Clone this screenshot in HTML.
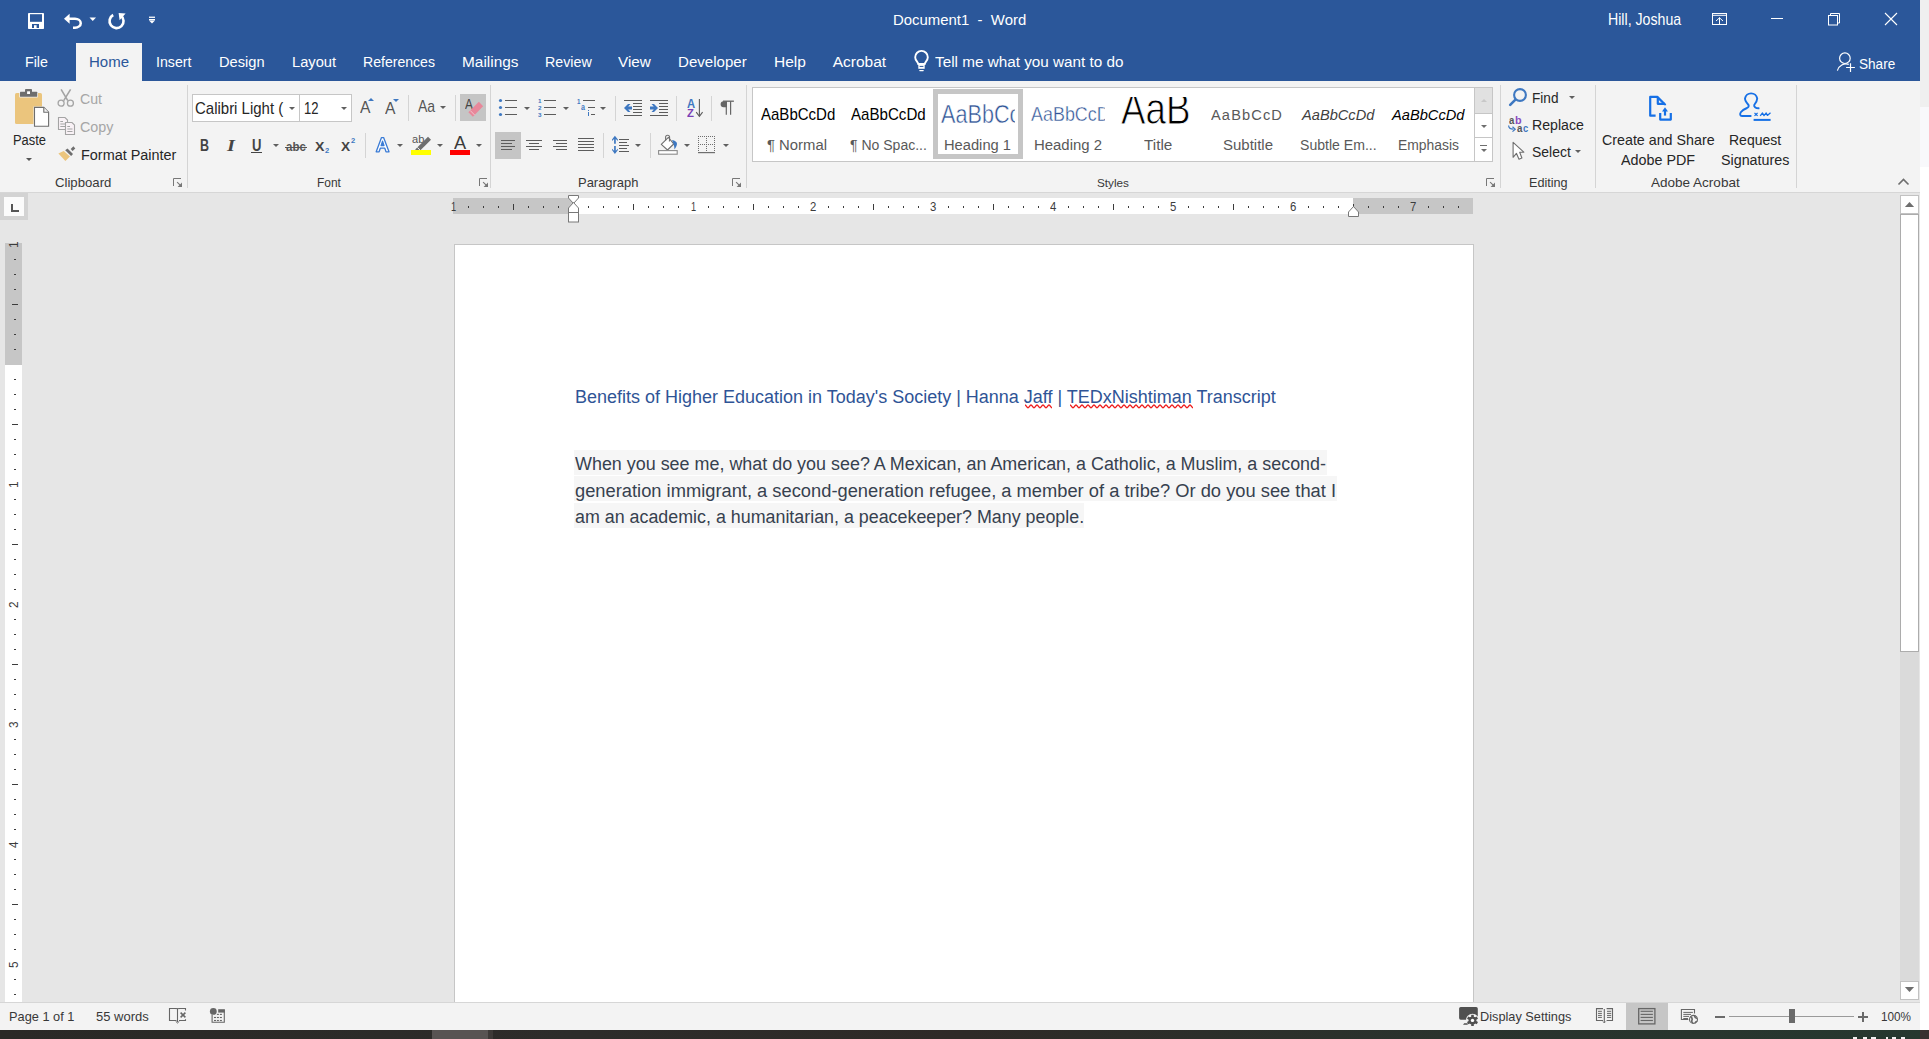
<!DOCTYPE html>
<html><head><meta charset="utf-8"><style>
html,body{margin:0;padding:0;width:1929px;height:1039px;overflow:hidden;background:#ffffff;}
body{position:relative;font-family:"Liberation Sans",sans-serif;}
.b{position:absolute;box-sizing:border-box;}
.t{position:absolute;white-space:pre;transform-origin:0 0;font-family:"Liberation Sans",sans-serif;}
svg{position:absolute;overflow:visible;}
</style></head><body>
<div class="b" style="left:1920px;top:0px;width:9px;height:107px;background:#efefef"></div>
<div class="b" style="left:1920px;top:107px;width:9px;height:60px;background:#f8f8fb"></div>
<div class="b" style="left:1920px;top:167px;width:9px;height:863px;background:#ffffff"></div>
<div class="b" style="left:0px;top:0px;width:1920px;height:81px;background:#2b579a"></div>
<div class="b" style="left:76px;top:43px;width:66px;height:38px;background:#f3f3f3"></div>
<div class="b" style="left:0px;top:81px;width:1920px;height:111px;background:#f3f3f3"></div>
<div class="b" style="left:0px;top:192px;width:1920px;height:1px;background:#d6d6d6"></div>
<div class="b" style="left:0px;top:193px;width:1920px;height:809px;background:#e6e6e6"></div>
<div class="b" style="left:0px;top:1002px;width:1920px;height:1px;background:#d6d6d6"></div>
<div class="b" style="left:0px;top:1003px;width:1920px;height:27px;background:#f3f3f3"></div>
<div class="b" style="left:0px;top:1030px;width:1929px;height:9px;background:linear-gradient(90deg,#2a2926 0%,#2d2c2a 30%,#2e2a27 50%,#2a332d 75%,#26382f 100%)"></div>
<div class="b" style="left:432px;top:1030px;width:56px;height:9px;background:#585453"></div>
<div class="b" style="left:488px;top:1030px;width:5px;height:9px;background:#3d3a38"></div>
<div class="b" style="left:1920px;top:1030px;width:9px;height:9px;background:#3a3131"></div>
<div class="b" style="left:454px;top:244px;width:1020px;height:758px;background:#fff;border-left:1px solid #c6c6c6;border-top:1px solid #c6c6c6;border-right:1px solid #c6c6c6"></div>
<div class="b" style="left:453px;top:198px;width:120px;height:16px;background:#c6c6c6"></div>
<div class="b" style="left:573px;top:198px;width:780px;height:16px;background:#ffffff"></div>
<div class="b" style="left:1353px;top:198px;width:120px;height:16px;background:#c6c6c6"></div>
<div class="b" style="left:0px;top:193px;width:28px;height:27px;background:#d3d3d3"></div>
<div class="b" style="left:4px;top:197px;width:20px;height:19px;background:#fbfbfb"></div>
<div class="b" style="left:5px;top:243px;width:17px;height:122px;background:#c6c6c6"></div>
<div class="b" style="left:5px;top:365px;width:17px;height:637px;background:#ffffff"></div>
<div class="b" style="left:1900px;top:195px;width:19px;height:19px;background:#fff;border:1px solid #c2c2c2"></div>
<div class="b" style="left:1900px;top:214px;width:19px;height:438px;background:#fff;border:1px solid #acacac"></div>
<div class="b" style="left:1900px;top:652px;width:19px;height:329px;background:#dadada"></div>
<div class="b" style="left:1900px;top:981px;width:19px;height:19px;background:#fff;border:1px solid #c2c2c2"></div>
<div class="b" style="left:574px;top:450px;width:753px;height:25px;background:#f6f6f6"></div>
<div class="b" style="left:574px;top:476px;width:763px;height:25px;background:#f6f6f6"></div>
<div class="b" style="left:574px;top:503px;width:510px;height:25px;background:#f6f6f6"></div>
<div class="t" style="left:892.90px;top:11.00px;font-size:15.50px;line-height:17px;color:#ffffff;transform:scaleX(0.9623);">Document1  -  Word</div>
<div class="t" style="left:1608.20px;top:10.00px;font-size:16.10px;line-height:18px;color:#ffffff;transform:scaleX(0.8798);">Hill, Joshua</div>
<div class="t" style="left:25.00px;top:53.00px;font-size:15.50px;line-height:17px;color:#ffffff;transform:scaleX(0.9177);">File</div>
<div class="t" style="left:156.20px;top:53.00px;font-size:15.50px;line-height:17px;color:#ffffff;transform:scaleX(0.9135);">Insert</div>
<div class="t" style="left:219.20px;top:53.00px;font-size:15.50px;line-height:17px;color:#ffffff;transform:scaleX(0.9444);">Design</div>
<div class="t" style="left:291.80px;top:53.00px;font-size:15.50px;line-height:17px;color:#ffffff;transform:scaleX(0.9468);">Layout</div>
<div class="t" style="left:362.90px;top:53.00px;font-size:15.50px;line-height:17px;color:#ffffff;transform:scaleX(0.9081);">References</div>
<div class="t" style="left:461.80px;top:53.00px;font-size:15.50px;line-height:17px;color:#ffffff;transform:scaleX(0.9932);">Mailings</div>
<div class="t" style="left:545.20px;top:53.00px;font-size:15.50px;line-height:17px;color:#ffffff;transform:scaleX(0.9186);">Review</div>
<div class="t" style="left:618.40px;top:53.00px;font-size:15.50px;line-height:17px;color:#ffffff;transform:scaleX(0.9842);">View</div>
<div class="t" style="left:678.00px;top:53.00px;font-size:15.50px;line-height:17px;color:#ffffff;transform:scaleX(0.9720);">Developer</div>
<div class="t" style="left:774.00px;top:53.00px;font-size:15.50px;line-height:17px;color:#ffffff;">Help</div>
<div class="t" style="left:832.70px;top:53.00px;font-size:15.50px;line-height:17px;color:#ffffff;">Acrobat</div>
<div class="t" style="left:935.30px;top:53.00px;font-size:15.50px;line-height:17px;color:#ffffff;transform:scaleX(0.9855);">Tell me what you want to do</div>
<div class="t" style="left:88.50px;top:53.00px;font-size:15.50px;line-height:17px;color:#2b579a;transform:scaleX(0.9690);">Home</div>
<div class="t" style="left:1859.40px;top:55.00px;font-size:15.40px;line-height:17px;color:#ffffff;transform:scaleX(0.8828);">Share</div>
<div class="t" style="left:12.50px;top:131.00px;font-size:15.50px;line-height:17px;color:#262626;transform:scaleX(0.8308);">Paste</div>
<div class="t" style="left:80.00px;top:91.00px;font-size:14.50px;line-height:16px;color:#a6a6a6;transform:scaleX(0.9757);">Cut</div>
<div class="t" style="left:80.00px;top:118.00px;font-size:15.20px;line-height:17px;color:#a6a6a6;transform:scaleX(0.9411);">Copy</div>
<div class="t" style="left:80.60px;top:146.00px;font-size:15.50px;line-height:17px;color:#262626;transform:scaleX(0.9304);">Format Painter</div>
<div class="t" style="left:54.60px;top:175.00px;font-size:13.60px;line-height:15px;color:#383838;transform:scaleX(0.9689);">Clipboard</div>
<div class="t" style="left:316.50px;top:175.00px;font-size:13.00px;line-height:15px;color:#383838;transform:scaleX(0.9192);">Font</div>
<div class="t" style="left:578.00px;top:175.00px;font-size:12.80px;line-height:15px;color:#383838;transform:scaleX(1.0121);">Paragraph</div>
<div class="t" style="left:1097.40px;top:176.00px;font-size:11.80px;line-height:14px;color:#383838;transform:scaleX(0.9952);">Styles</div>
<div class="t" style="left:1528.70px;top:176.00px;font-size:12.60px;line-height:14px;color:#383838;transform:scaleX(1.0037);">Editing</div>
<div class="t" style="left:1651.30px;top:175.00px;font-size:13.30px;line-height:15px;color:#383838;transform:scaleX(1.0166);">Adobe Acrobat</div>
<div class="t" style="left:1531.50px;top:89.00px;font-size:15.10px;line-height:17px;color:#262626;transform:scaleX(0.9023);">Find</div>
<div class="t" style="left:1531.80px;top:116.00px;font-size:15.10px;line-height:17px;color:#262626;transform:scaleX(0.9365);">Replace</div>
<div class="t" style="left:1531.80px;top:144.00px;font-size:14.90px;line-height:16px;color:#262626;transform:scaleX(0.9367);">Select</div>
<div class="t" style="left:1602.30px;top:132.00px;font-size:14.80px;line-height:16px;color:#262626;transform:scaleX(0.9637);">Create and Share</div>
<div class="t" style="left:1621.40px;top:152.00px;font-size:14.90px;line-height:16px;color:#262626;transform:scaleX(0.9619);">Adobe PDF</div>
<div class="t" style="left:1728.50px;top:132.00px;font-size:14.80px;line-height:16px;color:#262626;transform:scaleX(0.9469);">Request</div>
<div class="t" style="left:1720.60px;top:152.00px;font-size:14.90px;line-height:16px;color:#262626;transform:scaleX(0.9604);">Signatures</div>
<div class="t" style="left:8.50px;top:1009.00px;font-size:13.20px;line-height:15px;color:#383838;transform:scaleX(0.9701);">Page 1 of 1</div>
<div class="t" style="left:95.50px;top:1009.00px;font-size:13.20px;line-height:15px;color:#383838;transform:scaleX(0.9852);">55 words</div>
<div class="t" style="left:1480.00px;top:1009.00px;font-size:13.20px;line-height:15px;color:#383838;transform:scaleX(0.9668);">Display Settings</div>
<div class="t" style="left:1880.90px;top:1009.00px;font-size:12.80px;line-height:15px;color:#383838;transform:scaleX(0.9186);">100%</div>
<div class="t" style="left:575.40px;top:386.00px;font-size:18.80px;line-height:21px;color:#2f5496;transform:scaleX(0.9580);">Benefits of Higher Education in Today's Society | Hanna Jaff | TEDxNishtiman Transcript</div>
<div class="t" style="left:574.50px;top:453.00px;font-size:19.20px;line-height:21px;color:#36414f;transform:scaleX(0.9339);">When you see me, what do you see? A Mexican, an American, a Catholic, a Muslim, a second-</div>
<div class="t" style="left:574.50px;top:480.00px;font-size:19.20px;line-height:21px;color:#36414f;transform:scaleX(0.9539);">generation immigrant, a second-generation refugee, a member of a tribe? Or do you see that I</div>
<div class="t" style="left:574.50px;top:506.00px;font-size:19.20px;line-height:21px;color:#36414f;transform:scaleX(0.9305);">am an academic, a humanitarian, a peacekeeper? Many people.</div>
<svg style="left:27px;top:12px" width="18" height="18" viewBox="0 0 18 18" ><rect x="1" y="1" width="16" height="16" rx="0.8" fill="#ffffff"/><rect x="3" y="2.2" width="12" height="7.6" fill="#2b579a"/><rect x="5" y="12" width="7" height="4" fill="#2b579a"/><rect x="7" y="13.2" width="2.6" height="2.8" fill="#ffffff"/></svg>
<svg style="left:62px;top:12px" width="22" height="20" viewBox="0 0 22 20" ><path d="M6 6.7 H13 A5.75 4.5 0 0 1 13 15.7 H11" fill="none" stroke="#ffffff" stroke-width="2.5"/><path d="M2 6.7 L7.6 1.7 V11.7 Z" fill="#ffffff"/></svg>
<svg style="left:88px;top:16px" width="10" height="6" viewBox="0 0 10 6" ><path d="M1.5 1.4 H8 L4.75 5 Z" fill="#ffffff"/></svg>
<svg style="left:107px;top:12px" width="21" height="19" viewBox="0 0 21 19" ><path d="M13.8 3.6 A7 7 0 1 1 6.2 3.0" fill="none" stroke="#ffffff" stroke-width="2.6"/><path d="M11.6 1 L18.6 1.6 L12.6 8.2 Z" fill="#ffffff"/></svg>
<svg style="left:147px;top:15px" width="10" height="10" viewBox="0 0 10 10" ><rect x="2" y="1.6" width="6" height="1.3" fill="#ffffff"/><rect x="2" y="4" width="6" height="1.3" fill="#ffffff"/><path d="M2 5.6 H8 L5 8.4 Z" fill="#ffffff"/></svg>
<svg style="left:1711px;top:12px" width="18" height="15" viewBox="0 0 18 15" ><rect x="1.5" y="1.5" width="14" height="11" fill="none" stroke="#ffffff" stroke-width="1"/><line x1="1.5" y1="3.3" x2="15.5" y2="3.3" stroke="#ffffff" stroke-width="1"/><line x1="8.5" y1="5.5" x2="8.5" y2="12.5" stroke="#ffffff" stroke-width="1"/><path d="M5 9 L8.5 5.8 L12 9" fill="none" stroke="#ffffff" stroke-width="1"/></svg>
<div class="b" style="left:1771px;top:18px;width:12px;height:1px;background:#fff"></div>
<svg style="left:1826px;top:12px" width="16" height="15" viewBox="0 0 16 15" ><rect x="2.5" y="3.5" width="9" height="9.5" fill="none" stroke="#ffffff" stroke-width="1"/><path d="M4.5 3.5 V1.5 H13.5 V11 H11.5" fill="none" stroke="#ffffff" stroke-width="1"/></svg>
<svg style="left:1884px;top:12px" width="15" height="15" viewBox="0 0 15 15" ><path d="M1 1 L13 13 M13 1 L1 13" stroke="#ffffff" stroke-width="1.1"/></svg>
<svg style="left:912px;top:49px" width="20" height="24" viewBox="0 0 20 24" ><path d="M6.3 15 C5.8 12.5 3.2 11.5 3.2 8.2 A6.3 6.3 0 0 1 15.8 8.2 C15.8 11.5 13.2 12.5 12.7 15 Z" fill="none" stroke="#ffffff" stroke-width="1.9"/><rect x="6.3" y="15" width="6.4" height="4.8" fill="#ffffff"/><rect x="7.6" y="16.9" width="3.8" height="1" fill="#2b579a"/><rect x="7.2" y="21" width="4.6" height="1.2" rx="0.6" fill="#ffffff"/></svg>
<svg style="left:1835px;top:50px" width="22" height="24" viewBox="0 0 22 24" ><circle cx="9.9" cy="8.2" r="5.3" fill="none" stroke="#ffffff" stroke-width="1.2"/><path d="M2.4 20.6 A9 9 0 0 1 13.8 14.4" fill="none" stroke="#ffffff" stroke-width="1.2"/><path d="M11.1 17.5 H19.9 M15.5 13.3 V21.9" stroke="#ffffff" stroke-width="1.2"/></svg>
<div class="b" style="left:187px;top:85px;width:1px;height:103px;background:#d4d4d4"></div>
<div class="b" style="left:490px;top:85px;width:1px;height:103px;background:#d4d4d4"></div>
<div class="b" style="left:746px;top:85px;width:1px;height:103px;background:#d4d4d4"></div>
<div class="b" style="left:1500px;top:85px;width:1px;height:103px;background:#d4d4d4"></div>
<div class="b" style="left:1595px;top:85px;width:1px;height:103px;background:#d4d4d4"></div>
<div class="b" style="left:1796px;top:85px;width:1px;height:103px;background:#d4d4d4"></div>
<svg style="left:173px;top:178px" width="10" height="10" viewBox="0 0 10 10" ><path d="M0.5 8 V0.5 H8" fill="none" stroke="#777" stroke-width="1"/><path d="M4.1 4.1 L8.2 8.2" stroke="#777" stroke-width="1.1"/><path d="M9 9 H4.6 L9 4.6 Z" fill="#777"/></svg>
<svg style="left:479px;top:178px" width="10" height="10" viewBox="0 0 10 10" ><path d="M0.5 8 V0.5 H8" fill="none" stroke="#777" stroke-width="1"/><path d="M4.1 4.1 L8.2 8.2" stroke="#777" stroke-width="1.1"/><path d="M9 9 H4.6 L9 4.6 Z" fill="#777"/></svg>
<svg style="left:732px;top:178px" width="10" height="10" viewBox="0 0 10 10" ><path d="M0.5 8 V0.5 H8" fill="none" stroke="#777" stroke-width="1"/><path d="M4.1 4.1 L8.2 8.2" stroke="#777" stroke-width="1.1"/><path d="M9 9 H4.6 L9 4.6 Z" fill="#777"/></svg>
<svg style="left:1486px;top:178px" width="10" height="10" viewBox="0 0 10 10" ><path d="M0.5 8 V0.5 H8" fill="none" stroke="#777" stroke-width="1"/><path d="M4.1 4.1 L8.2 8.2" stroke="#777" stroke-width="1.1"/><path d="M9 9 H4.6 L9 4.6 Z" fill="#777"/></svg>
<svg style="left:13px;top:87px" width="40" height="42" viewBox="0 0 40 42" ><rect x="2" y="6" width="27" height="31" rx="1.6" fill="#ebc57d"/><rect x="6.3" y="4.2" width="18.6" height="6.2" rx="0.6" fill="#f3f3f3"/><rect x="7" y="4.7" width="17.2" height="5" rx="0.5" fill="#6e6e6e"/><rect x="12" y="2" width="7" height="4" rx="0.8" fill="#6e6e6e"/><rect x="14.1" y="4.3" width="2.9" height="2.7" fill="#fff"/><rect x="20.5" y="19.5" width="16" height="21" fill="#f3f3f3"/><path d="M21.5 20.4 H30.8 L35.6 25.2 V39.3 H21.5 Z" fill="#fff" stroke="#6e6e6e" stroke-width="1.1"/><path d="M30.8 20.4 V25.2 H35.6" fill="#f3f3f3" stroke="#6e6e6e" stroke-width="1.1" stroke-linejoin="round"/></svg>
<svg style="left:25px;top:157px" width="8" height="5" viewBox="0 0 8 5" ><path d="M1 1 H7 L4.0 4 Z" fill="#555"/></svg>
<svg style="left:56px;top:88px" width="20" height="20" viewBox="0 0 20 20" ><circle cx="5.1" cy="15.2" r="3" fill="none" stroke="#a4a4a4" stroke-width="1.3"/><circle cx="14.4" cy="15.2" r="3" fill="none" stroke="#a4a4a4" stroke-width="1.3"/><path d="M5.1 1.4 L11.8 12.6 M14.6 1.4 L7.7 12.6" stroke="#a4a4a4" stroke-width="1.6"/></svg>
<svg style="left:56px;top:115px" width="21" height="22" viewBox="0 0 21 22" ><path d="M2.5 2.5 H9 L11.5 5 V14.5 H2.5 Z" fill="#f9f2f6" stroke="#a4a4a4" stroke-width="1.1"/><path d="M4.3 6.5 H7 M4.3 9 H9.5 M4.3 11.5 H9.5" stroke="#a4a4a4" stroke-width="1"/><path d="M9.5 7.5 H16 L18.5 10 V19.5 H9.5 Z" fill="#f9f2f6" stroke="#a4a4a4" stroke-width="1.1"/><path d="M11.3 11.5 H14 M11.3 14 H16.5 M11.3 16.5 H16.5" stroke="#a4a4a4" stroke-width="1"/></svg>
<svg style="left:55px;top:142px" width="24" height="22" viewBox="0 0 24 22" ><path d="M3.4 11.4 L8.7 9.1 L15 14.4 L10.4 19.1 Z" fill="#ebc57d"/><path d="M10.2 8.3 L12.5 6.6 L18 12.1 L16.1 14 Z" fill="#6e6e6e"/><path d="M15.7 7 L18.4 4.2 L20.3 6.4 L17.6 9.1 Z" fill="#6e6e6e"/></svg>
<div class="b" style="left:192px;top:94px;width:108px;height:28px;background:#fff;border:1px solid #c6c6c6"></div>
<div class="b" style="left:299px;top:94px;width:53px;height:28px;background:#fff;border:1px solid #c6c6c6"></div>
<svg style="left:288px;top:106px" width="8" height="5" viewBox="0 0 8 5" ><path d="M1 1 H7 L4.0 4 Z" fill="#5f5f5f"/></svg>
<svg style="left:340px;top:106px" width="8" height="5" viewBox="0 0 8 5" ><path d="M1 1 H7 L4.0 4 Z" fill="#5f5f5f"/></svg>
<div class="t" style="left:195.40px;top:99.00px;font-size:16.20px;line-height:18px;color:#262626;transform:scaleX(0.9254);">Calibri Light (</div>
<div class="t" style="left:304.00px;top:99.00px;font-size:16.20px;line-height:18px;color:#262626;transform:scaleX(0.8064);">12</div>
<div class="t" style="left:359.90px;top:98.00px;font-size:16.10px;line-height:18px;color:#555;transform:scaleX(0.9734);">A</div>
<svg style="left:367px;top:97px" width="8" height="5" viewBox="0 0 8 5" ><path d="M1 4 H7 L4 1 Z" fill="#3e78c1"/></svg>
<div class="t" style="left:385.10px;top:100.00px;font-size:15.90px;line-height:17px;color:#555;transform:scaleX(0.9856);">A</div>
<svg style="left:392px;top:98px" width="8" height="5" viewBox="0 0 8 5" ><path d="M1 1 H7 L4 4 Z" fill="#3e78c1"/></svg>
<div class="b" style="left:408px;top:95px;width:1px;height:26px;background:#d4d4d4"></div>
<div class="t" style="left:417.60px;top:97.00px;font-size:16.40px;line-height:18px;color:#555;transform:scaleX(0.8561);">Aa</div>
<svg style="left:439px;top:105px" width="8" height="5" viewBox="0 0 8 5" ><path d="M1 1 H7 L4.0 4 Z" fill="#5f5f5f"/></svg>
<div class="b" style="left:455px;top:95px;width:1px;height:26px;background:#d4d4d4"></div>
<div class="b" style="left:460px;top:94px;width:26px;height:27px;background:#c5c5c5"></div>
<div class="t" style="left:465.40px;top:95.00px;font-size:15.50px;line-height:17px;color:#444;transform:scaleX(0.7607);">A</div>
<svg style="left:466px;top:100px" width="20" height="20" viewBox="0 0 20 20" ><path d="M2.4 12.3 L12.9 1.8 L17.1 6.3 L6.9 16.8 Z" fill="#e8879a"/><path d="M4.2 10.5 L8.6 15" stroke="#f2c4cd" stroke-width="1"/></svg>
<div class="t" style="left:199.70px;top:136.00px;font-size:16.70px;line-height:19px;color:#444;font-weight:bold;transform:scaleX(0.7485);">B</div>
<div class="t" style="left:227.30px;top:135.00px;font-size:17.42px;line-height:20px;color:#444;font-weight:bold;font-style:italic;transform:scaleX(1.1748);font-family:'Liberation Serif',serif;">I</div>
<div class="t" style="left:251.90px;top:136.00px;font-size:16.70px;line-height:19px;color:#444;font-weight:bold;transform:scaleX(0.7818);">U</div>
<div class="b" style="left:251px;top:152px;width:11px;height:1px;background:#444"></div>
<svg style="left:272px;top:143px" width="8" height="5" viewBox="0 0 8 5" ><path d="M1 1 H7 L4.0 4 Z" fill="#5f5f5f"/></svg>
<div class="t" style="left:286.10px;top:139.00px;font-size:13.33px;line-height:15px;color:#555;font-weight:bold;transform:scaleX(0.8654);">abc</div>
<div class="b" style="left:285px;top:146.6px;width:22px;height:1.2px;background:#555"></div>
<div class="t" style="left:314.80px;top:140.00px;font-size:12.30px;line-height:14px;color:#444;font-weight:bold;transform:scaleX(1.1492);">X</div>
<div class="t" style="left:324.90px;top:146.00px;font-size:7.68px;line-height:9px;color:#3e78c1;font-weight:bold;transform:scaleX(0.9854);">2</div>
<div class="t" style="left:340.90px;top:140.00px;font-size:12.30px;line-height:14px;color:#444;font-weight:bold;transform:scaleX(1.1125);">X</div>
<div class="t" style="left:350.90px;top:136.00px;font-size:7.83px;line-height:9px;color:#3e78c1;font-weight:bold;transform:scaleX(0.9665);">2</div>
<div class="b" style="left:365px;top:133px;width:1px;height:25px;background:#d4d4d4"></div>
<svg style="left:374px;top:136px" width="18" height="18" viewBox="0 0 18 18" ><path d="M2.2 15.8 L7.5 1.6 H9.6 L15 15.8 H12 L10.8 12.2 H6.3 L5.1 15.8 Z M7.1 9.6 H10 L8.55 5.2 Z" fill="#fff" stroke="#3a7bd5" stroke-width="1.3" stroke-linejoin="round"/><path d="M7.4 9.3 H9.7 L8.55 5.6 Z" fill="#3a7bd5"/></svg>
<svg style="left:396px;top:143px" width="8" height="5" viewBox="0 0 8 5" ><path d="M1 1 H7 L4.0 4 Z" fill="#5f5f5f"/></svg>
<div class="t" style="left:411.50px;top:133.00px;font-size:10.68px;line-height:12px;color:#555;transform:scaleX(1.0376);">ab</div>
<svg style="left:412px;top:135px" width="22" height="18" viewBox="0 0 22 18" ><path d="M3.2 14.5 L16 1.8 L19 4.8 L6.2 17.5 Z" fill="#6e6e6e"/><path d="M5.3 12.4 L8.3 15.4" stroke="#f3f3f3" stroke-width="1"/></svg>
<div class="b" style="left:411px;top:150px;width:20px;height:5px;background:#ffff00"></div>
<svg style="left:436px;top:143px" width="8" height="5" viewBox="0 0 8 5" ><path d="M1 1 H7 L4.0 4 Z" fill="#5f5f5f"/></svg>
<div class="t" style="left:453.60px;top:132.00px;font-size:18.60px;line-height:21px;color:#3a3a3a;transform:scaleX(0.9790);">A</div>
<div class="b" style="left:450px;top:150px;width:20px;height:5px;background:#ff0000"></div>
<svg style="left:475px;top:143px" width="8" height="5" viewBox="0 0 8 5" ><path d="M1 1 H7 L4.0 4 Z" fill="#5f5f5f"/></svg>
<svg style="left:498px;top:98.0px" width="5" height="5" viewBox="0 0 5 5" ><circle cx="2.5" cy="2.5" r="1.6" fill="#3e78c1"/></svg>
<div class="b" style="left:505.1px;top:99.95px;width:11.899999999999977px;height:1.1px;background:#5c5c5c"></div>
<svg style="left:498px;top:104.9px" width="5" height="5" viewBox="0 0 5 5" ><circle cx="2.5" cy="2.5" r="1.6" fill="#3e78c1"/></svg>
<div class="b" style="left:505.1px;top:106.85000000000001px;width:11.899999999999977px;height:1.1px;background:#5c5c5c"></div>
<svg style="left:498px;top:111.9px" width="5" height="5" viewBox="0 0 5 5" ><circle cx="2.5" cy="2.5" r="1.6" fill="#3e78c1"/></svg>
<div class="b" style="left:505.1px;top:113.85000000000001px;width:11.899999999999977px;height:1.1px;background:#5c5c5c"></div>
<svg style="left:523px;top:106px" width="8" height="5" viewBox="0 0 8 5" ><path d="M1 1 H7 L4.0 4 Z" fill="#5f5f5f"/></svg>
<div class="b" style="left:544px;top:99.95px;width:12px;height:1.1px;background:#5c5c5c"></div>
<div class="b" style="left:544px;top:106.85000000000001px;width:12px;height:1.1px;background:#5c5c5c"></div>
<div class="b" style="left:544px;top:113.85000000000001px;width:12px;height:1.1px;background:#5c5c5c"></div>
<div class="t" style="left:537.80px;top:97.00px;font-size:6.23px;line-height:7px;color:#3e78c1;font-weight:bold;transform:scaleX(1.0122);">1</div>
<div class="t" style="left:537.80px;top:104.00px;font-size:6.23px;line-height:7px;color:#3e78c1;font-weight:bold;transform:scaleX(1.0122);">2</div>
<div class="t" style="left:537.80px;top:111.00px;font-size:6.23px;line-height:7px;color:#3e78c1;font-weight:bold;transform:scaleX(1.0122);">3</div>
<svg style="left:562px;top:106px" width="8" height="5" viewBox="0 0 8 5" ><path d="M1 1 H7 L4.0 4 Z" fill="#5f5f5f"/></svg>
<div class="t" style="left:576.70px;top:97.00px;font-size:7.25px;line-height:9px;color:#3e78c1;font-weight:bold;transform:scaleX(0.8450);">1</div>
<div class="b" style="left:583.2px;top:99.95px;width:11.799999999999955px;height:1.1px;background:#5c5c5c"></div>
<div class="t" style="left:581.00px;top:102.00px;font-size:8.30px;line-height:10px;color:#3e78c1;font-weight:bold;transform:scaleX(0.8530);">a</div>
<div class="b" style="left:588.2px;top:106.85000000000001px;width:6.7999999999999545px;height:1.1px;background:#5c5c5c"></div>
<div class="b" style="left:587.9px;top:111.5px;width:1.4px;height:4.6px;background:#3e78c1"></div>
<div class="b" style="left:587.9px;top:110.2px;width:1.4px;height:0.9px;background:#3e78c1"></div>
<div class="b" style="left:591px;top:113.85000000000001px;width:4px;height:1.1px;background:#5c5c5c"></div>
<svg style="left:599px;top:106px" width="8" height="5" viewBox="0 0 8 5" ><path d="M1 1 H7 L4.0 4 Z" fill="#5f5f5f"/></svg>
<div class="b" style="left:615px;top:96px;width:1px;height:25px;background:#d4d4d4"></div>
<div class="b" style="left:624px;top:99.85000000000001px;width:18px;height:1.1px;background:#5c5c5c"></div>
<div class="b" style="left:624px;top:114.85000000000001px;width:18px;height:1.1px;background:#5c5c5c"></div>
<div class="b" style="left:633.2px;top:102.85000000000001px;width:8.799999999999955px;height:1.1px;background:#5c5c5c"></div>
<div class="b" style="left:633.2px;top:105.85000000000001px;width:8.799999999999955px;height:1.1px;background:#5c5c5c"></div>
<div class="b" style="left:633.2px;top:108.85000000000001px;width:8.799999999999955px;height:1.1px;background:#5c5c5c"></div>
<div class="b" style="left:633.2px;top:111.85000000000001px;width:8.799999999999955px;height:1.1px;background:#5c5c5c"></div>
<svg style="left:623px;top:103px" width="10" height="10" viewBox="0 0 10 10" ><path d="M1 4.9 L5 1 H7.5 L5.2 3.6 H9 V6.4 H5.2 L7.5 9 H5 Z" fill="#3e78c1"/></svg>
<div class="b" style="left:650px;top:99.85000000000001px;width:18px;height:1.1px;background:#5c5c5c"></div>
<div class="b" style="left:650px;top:114.85000000000001px;width:18px;height:1.1px;background:#5c5c5c"></div>
<div class="b" style="left:659.1px;top:102.85000000000001px;width:8.899999999999977px;height:1.1px;background:#5c5c5c"></div>
<div class="b" style="left:659.1px;top:105.85000000000001px;width:8.899999999999977px;height:1.1px;background:#5c5c5c"></div>
<div class="b" style="left:659.1px;top:108.85000000000001px;width:8.899999999999977px;height:1.1px;background:#5c5c5c"></div>
<div class="b" style="left:659.1px;top:111.85000000000001px;width:8.899999999999977px;height:1.1px;background:#5c5c5c"></div>
<svg style="left:649px;top:103px" width="10" height="10" viewBox="0 0 10 10" ><path d="M9 4.9 L5 1 H2.5 L4.8 3.6 H1 V6.4 H4.8 L2.5 9 H5 Z" fill="#3e78c1"/></svg>
<div class="b" style="left:676px;top:96px;width:1px;height:25px;background:#d4d4d4"></div>
<div class="t" style="left:686.80px;top:96.00px;font-size:12.80px;line-height:15px;color:#3e78c1;font-weight:bold;transform:scaleX(0.8789);">A</div>
<div class="t" style="left:687.10px;top:107.00px;font-size:11.20px;line-height:12px;color:#7a3fb6;font-weight:bold;transform:scaleX(1.0100);">Z</div>
<svg style="left:695px;top:98px" width="9" height="20" viewBox="0 0 9 20" ><path d="M4.4 1 V18.3" stroke="#5c5c5c" stroke-width="1.1"/><path d="M1.2 14.2 L4.4 18.3 L7.6 14.2" fill="none" stroke="#5c5c5c" stroke-width="1.1"/></svg>
<div class="b" style="left:711px;top:96px;width:1px;height:25px;background:#d4d4d4"></div>
<svg style="left:720px;top:98px" width="16" height="20" viewBox="0 0 16 20" ><path d="M7 3.2 H3.6 A3 3 0 0 0 3.6 9.2 H7 Z" fill="#666"/><path d="M3 3.2 H13.9" stroke="#666" stroke-width="1.3"/><path d="M6.3 3.2 V16.7 M10.6 3.2 V16.7" stroke="#666" stroke-width="1.2"/></svg>
<div class="b" style="left:495px;top:132px;width:26px;height:27px;background:#c5c5c5"></div>
<div class="b" style="left:501.2px;top:139.85px;width:13.800000000000011px;height:1.1px;background:#5c5c5c"></div>
<div class="b" style="left:526px;top:139.85px;width:16px;height:1.1px;background:#5c5c5c"></div>
<div class="b" style="left:553.1px;top:139.85px;width:13.799999999999955px;height:1.1px;background:#5c5c5c"></div>
<div class="b" style="left:501.2px;top:142.85px;width:10.800000000000011px;height:1.1px;background:#5c5c5c"></div>
<div class="b" style="left:529.1px;top:142.85px;width:9.799999999999955px;height:1.1px;background:#5c5c5c"></div>
<div class="b" style="left:556.2px;top:142.85px;width:10.699999999999932px;height:1.1px;background:#5c5c5c"></div>
<div class="b" style="left:501.2px;top:145.85px;width:13.800000000000011px;height:1.1px;background:#5c5c5c"></div>
<div class="b" style="left:526px;top:145.85px;width:16px;height:1.1px;background:#5c5c5c"></div>
<div class="b" style="left:553.1px;top:145.85px;width:13.799999999999955px;height:1.1px;background:#5c5c5c"></div>
<div class="b" style="left:501.2px;top:148.95px;width:10.800000000000011px;height:1.1px;background:#5c5c5c"></div>
<div class="b" style="left:529.1px;top:148.95px;width:9.799999999999955px;height:1.1px;background:#5c5c5c"></div>
<div class="b" style="left:556.2px;top:148.95px;width:10.699999999999932px;height:1.1px;background:#5c5c5c"></div>
<div class="b" style="left:578px;top:137.85px;width:16px;height:1.1px;background:#5c5c5c"></div>
<div class="b" style="left:578px;top:140.85px;width:16px;height:1.1px;background:#5c5c5c"></div>
<div class="b" style="left:578px;top:143.85px;width:16px;height:1.1px;background:#5c5c5c"></div>
<div class="b" style="left:578px;top:146.85px;width:16px;height:1.1px;background:#5c5c5c"></div>
<div class="b" style="left:578px;top:149.95px;width:16px;height:1.1px;background:#5c5c5c"></div>
<div class="b" style="left:603px;top:133px;width:1px;height:25px;background:#d4d4d4"></div>
<svg style="left:611px;top:135px" width="8" height="20" viewBox="0 0 8 20" ><path d="M3.9 0.7 L6.9 4.6 V5.9 L4.8 3.9 V8.8 H3.1 V3.9 L1 5.9 V4.6 Z" fill="#3e78c1"/><path d="M3.9 19 L6.9 15.1 V13.8 L4.8 15.8 V11 H3.1 V15.8 L1 13.8 V15.1 Z" fill="#3e78c1"/></svg>
<div class="b" style="left:619px;top:138.95px;width:9.899999999999977px;height:1.1px;background:#5c5c5c"></div>
<div class="b" style="left:619px;top:141.95px;width:7.899999999999977px;height:1.1px;background:#5c5c5c"></div>
<div class="b" style="left:619px;top:144.95px;width:9.899999999999977px;height:1.1px;background:#5c5c5c"></div>
<div class="b" style="left:619px;top:147.95px;width:7.899999999999977px;height:1.1px;background:#5c5c5c"></div>
<div class="b" style="left:619px;top:150.95px;width:9.899999999999977px;height:1.1px;background:#5c5c5c"></div>
<svg style="left:634px;top:143px" width="8" height="5" viewBox="0 0 8 5" ><path d="M1 1 H7 L4.0 4 Z" fill="#5f5f5f"/></svg>
<div class="b" style="left:650px;top:133px;width:1px;height:25px;background:#d4d4d4"></div>
<svg style="left:654px;top:132px" width="26" height="25" viewBox="0 0 26 25" ><path d="M7.3 12.4 L14.4 5.3 L19.7 12 L13.5 18 Z" fill="#fff" stroke="#707070" stroke-width="1.1" stroke-linejoin="round"/><path d="M11.6 8.6 V5.2 A2 2 0 0 1 15.6 5.2 L15.4 9.6" fill="none" stroke="#707070" stroke-width="1.1"/><path d="M18 8 C21 8.5 23.2 10 23 12 C22.8 14 21.5 16 20.5 17.6 C20.3 15 20 13 19.6 12 Z" fill="#3e78c1"/><rect x="4.6" y="18.6" width="18.6" height="3.6" fill="#fff" stroke="#8a8a8a" stroke-width="1.1"/></svg>
<svg style="left:683px;top:143px" width="8" height="5" viewBox="0 0 8 5" ><path d="M1 1 H7 L4.0 4 Z" fill="#5f5f5f"/></svg>
<svg style="left:698px;top:136px" width="18" height="18" viewBox="0 0 18 18" ><g fill="#6e6e6e"><rect x="0" y="0" width="1" height="1"/><rect x="0" y="8" width="1" height="1"/><rect x="2" y="0" width="1" height="1"/><rect x="2" y="8" width="1" height="1"/><rect x="4" y="0" width="1" height="1"/><rect x="4" y="8" width="1" height="1"/><rect x="6" y="0" width="1" height="1"/><rect x="6" y="8" width="1" height="1"/><rect x="8" y="0" width="1" height="1"/><rect x="8" y="8" width="1" height="1"/><rect x="10" y="0" width="1" height="1"/><rect x="10" y="8" width="1" height="1"/><rect x="12" y="0" width="1" height="1"/><rect x="12" y="8" width="1" height="1"/><rect x="14" y="0" width="1" height="1"/><rect x="14" y="8" width="1" height="1"/><rect x="16" y="0" width="1" height="1"/><rect x="16" y="8" width="1" height="1"/><rect x="0" y="2" width="1" height="1"/><rect x="0" y="4" width="1" height="1"/><rect x="0" y="6" width="1" height="1"/><rect x="0" y="10" width="1" height="1"/><rect x="0" y="12" width="1" height="1"/><rect x="0" y="14" width="1" height="1"/><rect x="8" y="2" width="1" height="1"/><rect x="8" y="4" width="1" height="1"/><rect x="8" y="6" width="1" height="1"/><rect x="8" y="10" width="1" height="1"/><rect x="8" y="12" width="1" height="1"/><rect x="8" y="14" width="1" height="1"/><rect x="16" y="2" width="1" height="1"/><rect x="16" y="4" width="1" height="1"/><rect x="16" y="6" width="1" height="1"/><rect x="16" y="10" width="1" height="1"/><rect x="16" y="12" width="1" height="1"/><rect x="16" y="14" width="1" height="1"/></g><rect x="0" y="16" width="17" height="1.2" fill="#6e6e6e"/></svg>
<svg style="left:722px;top:143px" width="8" height="5" viewBox="0 0 8 5" ><path d="M1 1 H7 L4.0 4 Z" fill="#5f5f5f"/></svg>
<div class="b" style="left:752px;top:87px;width:741px;height:75px;background:#fff;border:1px solid #c6c6c6"></div>
<div class="b" style="left:1474px;top:87px;width:19px;height:27px;background:#e1e1e1;border:1px solid #c6c6c6"></div>
<div class="b" style="left:1474px;top:113px;width:19px;height:25px;background:#fff;border:1px solid #c6c6c6"></div>
<div class="b" style="left:1474px;top:137px;width:19px;height:25px;background:#fff;border:1px solid #c6c6c6"></div>
<svg style="left:1480px;top:98px" width="8" height="5" viewBox="0 0 8 5" ><path d="M1 4 H7 L4 1 Z" fill="#c8c8c8"/></svg>
<svg style="left:1480px;top:124px" width="8" height="5" viewBox="0 0 8 5" ><path d="M1 1 H7 L4 4 Z" fill="#6e6e6e"/></svg>
<div class="b" style="left:1480px;top:145px;width:7px;height:1px;background:#6e6e6e"></div>
<svg style="left:1480px;top:148px" width="8" height="5" viewBox="0 0 8 5" ><path d="M1 1 H7 L4 4 Z" fill="#6e6e6e"/></svg>
<div class="b" style="left:933px;top:89px;width:90px;height:70px;border:5px solid #c6c6c6"></div>
<div class="t" style="left:761.00px;top:105.00px;font-size:16.10px;line-height:18px;color:#000;transform:scaleX(0.9332);">AaBbCcDd</div>
<div class="t" style="left:767.00px;top:136.00px;font-size:15.50px;line-height:17px;color:#595959;transform:scaleX(0.9582);">¶ Normal</div>
<div class="t" style="left:850.70px;top:105.00px;font-size:16.10px;line-height:18px;color:#000;transform:scaleX(0.9383);">AaBbCcDd</div>
<div class="t" style="left:849.50px;top:136.00px;font-size:15.50px;line-height:17px;color:#595959;transform:scaleX(0.9045);">¶ No Spac...</div>
<div style="position:absolute;left:938px;top:94px;width:77px;height:60px;overflow:hidden"><div style="position:absolute;left:-938px;top:-94px;width:1929px;height:1039px"><div class="t" style="left:941.10px;top:100.00px;font-size:25.70px;line-height:28px;color:#2f5496;transform:scaleX(0.8429);-webkit-text-stroke:0.5px #fff;">AaBbCc</div></div></div>
<div class="t" style="left:943.60px;top:136.00px;font-size:15.50px;line-height:17px;color:#595959;transform:scaleX(0.9479);">Heading 1</div>
<div style="position:absolute;left:1025px;top:90px;width:80px;height:68px;overflow:hidden"><div style="position:absolute;left:-1025px;top:-90px;width:1929px;height:1039px"><div class="t" style="left:1031.20px;top:103.00px;font-size:20.30px;line-height:22px;color:#2f5496;transform:scaleX(0.8842);-webkit-text-stroke:0.4px #fff;">AaBbCcD</div></div></div>
<div class="t" style="left:1033.60px;top:136.00px;font-size:15.50px;line-height:17px;color:#595959;transform:scaleX(0.9621);">Heading 2</div>
<div style="position:absolute;left:1110px;top:97px;width:95px;height:61px;overflow:hidden"><div style="position:absolute;left:-1110px;top:-97px;width:1929px;height:1039px"><div class="t" style="left:1121.00px;top:84.00px;font-size:44.50px;line-height:49px;color:#000;transform:scaleX(0.8263);-webkit-text-stroke:0.9px #fff;">AaB</div></div></div>
<div class="t" style="left:1143.50px;top:136.00px;font-size:15.50px;line-height:17px;color:#595959;transform:scaleX(0.9869);">Title</div>
<div style="position:absolute;left:1205px;top:90px;width:79px;height:68px;overflow:hidden"><div style="position:absolute;left:-1205px;top:-90px;width:1929px;height:1039px"><div class="t" style="left:1211.10px;top:106.00px;font-size:15.50px;line-height:17px;color:#595959;transform:scaleX(0.9423);letter-spacing:1.2px;">AaBbCcD</div></div></div>
<div class="t" style="left:1222.60px;top:136.00px;font-size:15.50px;line-height:17px;color:#595959;transform:scaleX(0.9673);">Subtitle</div>
<div class="t" style="left:1301.73px;top:106.00px;font-size:15.50px;line-height:17px;color:#404040;font-style:italic;transform:scaleX(0.9437);">AaBbCcDd</div>
<div class="t" style="left:1299.60px;top:136.00px;font-size:15.50px;line-height:17px;color:#595959;transform:scaleX(0.9076);">Subtle Em...</div>
<div class="t" style="left:1391.73px;top:106.00px;font-size:15.50px;line-height:17px;color:#000;font-style:italic;transform:scaleX(0.9450);">AaBbCcDd</div>
<div class="t" style="left:1398.00px;top:136.00px;font-size:15.50px;line-height:17px;color:#595959;transform:scaleX(0.8965);">Emphasis</div>
<svg style="left:1504px;top:86px" width="26" height="22" viewBox="0 0 26 22" ><circle cx="16" cy="9" r="5.9" fill="none" stroke="#3e78c1" stroke-width="2.1"/><path d="M11.2 13.8 L6.2 18.8" stroke="#3e78c1" stroke-width="2.6" stroke-linecap="round"/></svg>
<svg style="left:1568px;top:95px" width="8" height="5" viewBox="0 0 8 5" ><path d="M1 1 H7 L4.0 4 Z" fill="#5f5f5f"/></svg>
<div class="t" style="left:1508.80px;top:115.00px;font-size:10.38px;line-height:11px;color:#555;font-weight:bold;transform:scaleX(0.9208);">a</div>
<div class="t" style="left:1514.60px;top:113.00px;font-size:11.67px;line-height:13px;color:#8a4cc0;font-weight:bold;transform:scaleX(0.9271);">b</div>
<div class="t" style="left:1516.80px;top:123.00px;font-size:10.38px;line-height:11px;color:#555;font-weight:bold;transform:scaleX(0.9378);">a</div>
<div class="t" style="left:1522.60px;top:123.00px;font-size:10.38px;line-height:11px;color:#3e78c1;font-weight:bold;transform:scaleX(0.9026);">c</div>
<svg style="left:1506px;top:123px" width="12" height="9" viewBox="0 0 12 9" ><path d="M2.6 2.6 C2.6 5 3.6 6.2 7.5 6.2" fill="none" stroke="#3e78c1" stroke-width="1.2"/><path d="M6.5 3.8 L9.2 6.2 L6.5 8.6" fill="none" stroke="#3e78c1" stroke-width="1.2"/></svg>
<svg style="left:1510px;top:140px" width="16" height="22" viewBox="0 0 16 22" ><path d="M3.1 2.3 V17.3 L6.4 13.3 L9 19.2 L11.9 18 L9.7 12.2 H13.8 Z" fill="#fff" stroke="#6e6e6e" stroke-width="1.1" stroke-linejoin="round"/></svg>
<svg style="left:1574px;top:149px" width="8" height="5" viewBox="0 0 8 5" ><path d="M1 1 H7 L4.0 4 Z" fill="#5f5f5f"/></svg>
<svg style="left:1640px;top:88px" width="40" height="36" viewBox="0 0 40 36" ><path d="M15.6 27.7 H10.2 V8.9 H17.3 L25 16.5 V17.2" fill="none" stroke="#1670e6" stroke-width="2.2" stroke-linejoin="round"/><path d="M17.8 8.9 V15.8 H25" fill="none" stroke="#1670e6" stroke-width="2.2" stroke-linejoin="round"/><path d="M20.2 25 V31.6 H30.8 V25" fill="none" stroke="#1670e6" stroke-width="2.2" stroke-linejoin="round"/><path d="M25 27.6 V22" stroke="#1670e6" stroke-width="2.2"/><path d="M22 23.4 L25 19.2 L28 23.4 Z" fill="#1670e6"/></svg>
<svg style="left:1736px;top:88px" width="40" height="36" viewBox="0 0 40 36" ><path d="M14.7 28 H6 C4 28 3.6 26 5 24 C6.5 22 8.5 21 11 20 C12.6 19.3 13 18 12.5 17 C10.3 14.5 9 12.5 9 10.5 A6.2 6.2 0 0 1 21.2 10.5 C21.2 12.5 20 14.8 18.2 17 C17.8 18.6 19.4 20 22.6 20.3" fill="none" stroke="#1670e6" stroke-width="1.9" stroke-linecap="round" stroke-linejoin="round"/><path d="M18.5 24.9 L21.6 27.9 M21.6 24.9 L18.5 27.9" stroke="#1670e6" stroke-width="1.3"/><path d="M24.2 27.9 L26.5 25 L28 27.6 L30.2 25 L31.4 27.4 L34.5 24.7" fill="none" stroke="#1670e6" stroke-width="1.3" stroke-linejoin="round"/><rect x="17.6" y="30.9" width="17" height="2" fill="#1670e6"/></svg>
<svg style="left:1896px;top:176px" width="15" height="11" viewBox="0 0 15 11" ><path d="M2.5 8.5 L7.5 3.5 L12.5 8.5" fill="none" stroke="#6e6e6e" stroke-width="1.6"/></svg>
<div class="t" style="left:450.75px;top:200.00px;font-size:12.29px;line-height:14px;color:#3c3c3c;transform:scaleX(0.7477);">1</div>
<div class="b" style="left:468px;top:206px;width:1px;height:2px;background:#3c3c3c"></div>
<div class="b" style="left:483px;top:206px;width:1px;height:2px;background:#3c3c3c"></div>
<div class="b" style="left:498px;top:206px;width:1px;height:2px;background:#3c3c3c"></div>
<div class="b" style="left:513px;top:204px;width:1px;height:6px;background:#3c3c3c"></div>
<div class="b" style="left:528px;top:206px;width:1px;height:2px;background:#3c3c3c"></div>
<div class="b" style="left:543px;top:206px;width:1px;height:2px;background:#3c3c3c"></div>
<div class="b" style="left:558px;top:206px;width:1px;height:2px;background:#3c3c3c"></div>
<div class="b" style="left:588px;top:206px;width:1px;height:2px;background:#3c3c3c"></div>
<div class="b" style="left:603px;top:206px;width:1px;height:2px;background:#3c3c3c"></div>
<div class="b" style="left:618px;top:206px;width:1px;height:2px;background:#3c3c3c"></div>
<div class="b" style="left:633px;top:204px;width:1px;height:6px;background:#3c3c3c"></div>
<div class="b" style="left:648px;top:206px;width:1px;height:2px;background:#3c3c3c"></div>
<div class="b" style="left:663px;top:206px;width:1px;height:2px;background:#3c3c3c"></div>
<div class="b" style="left:678px;top:206px;width:1px;height:2px;background:#3c3c3c"></div>
<div class="t" style="left:690.75px;top:200.00px;font-size:12.29px;line-height:14px;color:#3c3c3c;transform:scaleX(0.7477);">1</div>
<div class="b" style="left:708px;top:206px;width:1px;height:2px;background:#3c3c3c"></div>
<div class="b" style="left:723px;top:206px;width:1px;height:2px;background:#3c3c3c"></div>
<div class="b" style="left:738px;top:206px;width:1px;height:2px;background:#3c3c3c"></div>
<div class="b" style="left:753px;top:204px;width:1px;height:6px;background:#3c3c3c"></div>
<div class="b" style="left:768px;top:206px;width:1px;height:2px;background:#3c3c3c"></div>
<div class="b" style="left:783px;top:206px;width:1px;height:2px;background:#3c3c3c"></div>
<div class="b" style="left:798px;top:206px;width:1px;height:2px;background:#3c3c3c"></div>
<div class="t" style="left:810.15px;top:200.00px;font-size:12.29px;line-height:14px;color:#3c3c3c;transform:scaleX(0.9236);">2</div>
<div class="b" style="left:828px;top:206px;width:1px;height:2px;background:#3c3c3c"></div>
<div class="b" style="left:843px;top:206px;width:1px;height:2px;background:#3c3c3c"></div>
<div class="b" style="left:858px;top:206px;width:1px;height:2px;background:#3c3c3c"></div>
<div class="b" style="left:873px;top:204px;width:1px;height:6px;background:#3c3c3c"></div>
<div class="b" style="left:888px;top:206px;width:1px;height:2px;background:#3c3c3c"></div>
<div class="b" style="left:903px;top:206px;width:1px;height:2px;background:#3c3c3c"></div>
<div class="b" style="left:918px;top:206px;width:1px;height:2px;background:#3c3c3c"></div>
<div class="t" style="left:930.15px;top:200.00px;font-size:12.29px;line-height:14px;color:#3c3c3c;transform:scaleX(0.9236);">3</div>
<div class="b" style="left:948px;top:206px;width:1px;height:2px;background:#3c3c3c"></div>
<div class="b" style="left:963px;top:206px;width:1px;height:2px;background:#3c3c3c"></div>
<div class="b" style="left:978px;top:206px;width:1px;height:2px;background:#3c3c3c"></div>
<div class="b" style="left:993px;top:204px;width:1px;height:6px;background:#3c3c3c"></div>
<div class="b" style="left:1008px;top:206px;width:1px;height:2px;background:#3c3c3c"></div>
<div class="b" style="left:1023px;top:206px;width:1px;height:2px;background:#3c3c3c"></div>
<div class="b" style="left:1038px;top:206px;width:1px;height:2px;background:#3c3c3c"></div>
<div class="t" style="left:1050.15px;top:200.00px;font-size:12.29px;line-height:14px;color:#3c3c3c;transform:scaleX(0.9236);">4</div>
<div class="b" style="left:1068px;top:206px;width:1px;height:2px;background:#3c3c3c"></div>
<div class="b" style="left:1083px;top:206px;width:1px;height:2px;background:#3c3c3c"></div>
<div class="b" style="left:1098px;top:206px;width:1px;height:2px;background:#3c3c3c"></div>
<div class="b" style="left:1113px;top:204px;width:1px;height:6px;background:#3c3c3c"></div>
<div class="b" style="left:1128px;top:206px;width:1px;height:2px;background:#3c3c3c"></div>
<div class="b" style="left:1143px;top:206px;width:1px;height:2px;background:#3c3c3c"></div>
<div class="b" style="left:1158px;top:206px;width:1px;height:2px;background:#3c3c3c"></div>
<div class="t" style="left:1170.15px;top:200.00px;font-size:12.29px;line-height:14px;color:#3c3c3c;transform:scaleX(0.9236);">5</div>
<div class="b" style="left:1188px;top:206px;width:1px;height:2px;background:#3c3c3c"></div>
<div class="b" style="left:1203px;top:206px;width:1px;height:2px;background:#3c3c3c"></div>
<div class="b" style="left:1218px;top:206px;width:1px;height:2px;background:#3c3c3c"></div>
<div class="b" style="left:1233px;top:204px;width:1px;height:6px;background:#3c3c3c"></div>
<div class="b" style="left:1248px;top:206px;width:1px;height:2px;background:#3c3c3c"></div>
<div class="b" style="left:1263px;top:206px;width:1px;height:2px;background:#3c3c3c"></div>
<div class="b" style="left:1278px;top:206px;width:1px;height:2px;background:#3c3c3c"></div>
<div class="t" style="left:1290.15px;top:200.00px;font-size:12.29px;line-height:14px;color:#3c3c3c;transform:scaleX(0.9236);">6</div>
<div class="b" style="left:1308px;top:206px;width:1px;height:2px;background:#3c3c3c"></div>
<div class="b" style="left:1323px;top:206px;width:1px;height:2px;background:#3c3c3c"></div>
<div class="b" style="left:1338px;top:206px;width:1px;height:2px;background:#3c3c3c"></div>
<div class="b" style="left:1353px;top:204px;width:1px;height:6px;background:#3c3c3c"></div>
<div class="b" style="left:1368px;top:206px;width:1px;height:2px;background:#3c3c3c"></div>
<div class="b" style="left:1383px;top:206px;width:1px;height:2px;background:#3c3c3c"></div>
<div class="b" style="left:1398px;top:206px;width:1px;height:2px;background:#3c3c3c"></div>
<div class="t" style="left:1410.15px;top:200.00px;font-size:12.29px;line-height:14px;color:#3c3c3c;transform:scaleX(0.9236);">7</div>
<div class="b" style="left:1428px;top:206px;width:1px;height:2px;background:#3c3c3c"></div>
<div class="b" style="left:1443px;top:206px;width:1px;height:2px;background:#3c3c3c"></div>
<div class="b" style="left:1458px;top:206px;width:1px;height:2px;background:#3c3c3c"></div>
<div style="position:absolute;left:9.3px;top:237.8px;width:12px;height:12px;transform:rotate(-90deg);"><div class="t" style="left:2.2px;top:-1.3px;font-size:12.8px;line-height:12.8px;color:#3c3c3c;transform:scaleX(0.92)">1</div></div>
<div class="b" style="left:14px;top:259px;width:2px;height:1px;background:#3c3c3c"></div>
<div class="b" style="left:14px;top:274px;width:2px;height:1px;background:#3c3c3c"></div>
<div class="b" style="left:14px;top:289px;width:2px;height:1px;background:#3c3c3c"></div>
<div class="b" style="left:12px;top:304px;width:6px;height:1px;background:#3c3c3c"></div>
<div class="b" style="left:14px;top:319px;width:2px;height:1px;background:#3c3c3c"></div>
<div class="b" style="left:14px;top:334px;width:2px;height:1px;background:#3c3c3c"></div>
<div class="b" style="left:14px;top:349px;width:2px;height:1px;background:#3c3c3c"></div>
<div class="b" style="left:14px;top:379px;width:2px;height:1px;background:#3c3c3c"></div>
<div class="b" style="left:14px;top:394px;width:2px;height:1px;background:#3c3c3c"></div>
<div class="b" style="left:14px;top:409px;width:2px;height:1px;background:#3c3c3c"></div>
<div class="b" style="left:12px;top:424px;width:6px;height:1px;background:#3c3c3c"></div>
<div class="b" style="left:14px;top:439px;width:2px;height:1px;background:#3c3c3c"></div>
<div class="b" style="left:14px;top:454px;width:2px;height:1px;background:#3c3c3c"></div>
<div class="b" style="left:14px;top:469px;width:2px;height:1px;background:#3c3c3c"></div>
<div style="position:absolute;left:9.3px;top:477.8px;width:12px;height:12px;transform:rotate(-90deg);"><div class="t" style="left:2.2px;top:-1.3px;font-size:12.8px;line-height:12.8px;color:#3c3c3c;transform:scaleX(0.92)">1</div></div>
<div class="b" style="left:14px;top:499px;width:2px;height:1px;background:#3c3c3c"></div>
<div class="b" style="left:14px;top:514px;width:2px;height:1px;background:#3c3c3c"></div>
<div class="b" style="left:14px;top:529px;width:2px;height:1px;background:#3c3c3c"></div>
<div class="b" style="left:12px;top:544px;width:6px;height:1px;background:#3c3c3c"></div>
<div class="b" style="left:14px;top:559px;width:2px;height:1px;background:#3c3c3c"></div>
<div class="b" style="left:14px;top:574px;width:2px;height:1px;background:#3c3c3c"></div>
<div class="b" style="left:14px;top:589px;width:2px;height:1px;background:#3c3c3c"></div>
<div style="position:absolute;left:9.3px;top:597.8px;width:12px;height:12px;transform:rotate(-90deg);"><div class="t" style="left:2.2px;top:-1.3px;font-size:12.8px;line-height:12.8px;color:#3c3c3c;transform:scaleX(0.92)">2</div></div>
<div class="b" style="left:14px;top:619px;width:2px;height:1px;background:#3c3c3c"></div>
<div class="b" style="left:14px;top:634px;width:2px;height:1px;background:#3c3c3c"></div>
<div class="b" style="left:14px;top:649px;width:2px;height:1px;background:#3c3c3c"></div>
<div class="b" style="left:12px;top:664px;width:6px;height:1px;background:#3c3c3c"></div>
<div class="b" style="left:14px;top:679px;width:2px;height:1px;background:#3c3c3c"></div>
<div class="b" style="left:14px;top:694px;width:2px;height:1px;background:#3c3c3c"></div>
<div class="b" style="left:14px;top:709px;width:2px;height:1px;background:#3c3c3c"></div>
<div style="position:absolute;left:9.3px;top:717.8px;width:12px;height:12px;transform:rotate(-90deg);"><div class="t" style="left:2.2px;top:-1.3px;font-size:12.8px;line-height:12.8px;color:#3c3c3c;transform:scaleX(0.92)">3</div></div>
<div class="b" style="left:14px;top:739px;width:2px;height:1px;background:#3c3c3c"></div>
<div class="b" style="left:14px;top:754px;width:2px;height:1px;background:#3c3c3c"></div>
<div class="b" style="left:14px;top:769px;width:2px;height:1px;background:#3c3c3c"></div>
<div class="b" style="left:12px;top:784px;width:6px;height:1px;background:#3c3c3c"></div>
<div class="b" style="left:14px;top:799px;width:2px;height:1px;background:#3c3c3c"></div>
<div class="b" style="left:14px;top:814px;width:2px;height:1px;background:#3c3c3c"></div>
<div class="b" style="left:14px;top:829px;width:2px;height:1px;background:#3c3c3c"></div>
<div style="position:absolute;left:9.3px;top:837.8px;width:12px;height:12px;transform:rotate(-90deg);"><div class="t" style="left:2.2px;top:-1.3px;font-size:12.8px;line-height:12.8px;color:#3c3c3c;transform:scaleX(0.92)">4</div></div>
<div class="b" style="left:14px;top:859px;width:2px;height:1px;background:#3c3c3c"></div>
<div class="b" style="left:14px;top:874px;width:2px;height:1px;background:#3c3c3c"></div>
<div class="b" style="left:14px;top:889px;width:2px;height:1px;background:#3c3c3c"></div>
<div class="b" style="left:12px;top:904px;width:6px;height:1px;background:#3c3c3c"></div>
<div class="b" style="left:14px;top:919px;width:2px;height:1px;background:#3c3c3c"></div>
<div class="b" style="left:14px;top:934px;width:2px;height:1px;background:#3c3c3c"></div>
<div class="b" style="left:14px;top:949px;width:2px;height:1px;background:#3c3c3c"></div>
<div style="position:absolute;left:9.3px;top:957.8px;width:12px;height:12px;transform:rotate(-90deg);"><div class="t" style="left:2.2px;top:-1.3px;font-size:12.8px;line-height:12.8px;color:#3c3c3c;transform:scaleX(0.92)">5</div></div>
<div class="b" style="left:14px;top:979px;width:2px;height:1px;background:#3c3c3c"></div>
<div class="b" style="left:14px;top:994px;width:2px;height:1px;background:#3c3c3c"></div>
<svg style="left:566px;top:194px" width="15" height="30" viewBox="0 0 15 30" ><path d="M2.5 1.5 H12.5 V4 L7.5 9.5 L2.5 4 Z" fill="#fff" stroke="#787878" stroke-width="1"/><path d="M2.5 18.5 V14 L7.5 8.5 L12.5 14 V18.5 Z" fill="#fff" stroke="#787878" stroke-width="1"/><rect x="2.5" y="18.5" width="10" height="9.5" fill="#fff" stroke="#787878" stroke-width="1"/></svg>
<svg style="left:1346px;top:203px" width="15" height="15" viewBox="0 0 15 15" ><path d="M2.5 13.5 V9 L7.5 3.5 L12.5 9 V13.5 Z" fill="#fff" stroke="#787878" stroke-width="1"/></svg>
<svg style="left:1904px;top:200px" width="11" height="8" viewBox="0 0 11 8" ><path d="M0.9 7 H10.1 L5.5 2 Z" fill="#6e6e6e"/></svg>
<svg style="left:1904px;top:986px" width="11" height="8" viewBox="0 0 11 8" ><path d="M0.9 1 H10.1 L5.5 6 Z" fill="#6e6e6e"/></svg>
<div class="b" style="left:11px;top:204px;width:2px;height:8px;background:#555"></div>
<div class="b" style="left:11px;top:210px;width:8px;height:2px;background:#555"></div>
<svg style="left:1025px;top:404.4px" width="31" height="5" viewBox="0 0 31 5" ><path d="M0 1 C1.2 1 1.8 3.8 3.0 3.8 C4.2 3.8 4.8 1 6.0 1 C7.2 1 7.8 3.8 9.0 3.8 C10.2 3.8 10.8 1 12.0 1 C13.2 1 13.8 3.8 15.0 3.8 C16.2 3.8 16.8 1 18.0 1 C19.2 1 19.8 3.8 21.0 3.8 C22.2 3.8 22.8 1 24.0 1 C25.2 1 25.8 3.8 27.0 3.8" fill="none" stroke="#ee1c1c" stroke-width="1.3"/></svg>
<svg style="left:1070px;top:404.4px" width="127" height="5" viewBox="0 0 127 5" ><path d="M0 1 C1.2 1 1.8 3.8 3.0 3.8 C4.2 3.8 4.8 1 6.0 1 C7.2 1 7.8 3.8 9.0 3.8 C10.2 3.8 10.8 1 12.0 1 C13.2 1 13.8 3.8 15.0 3.8 C16.2 3.8 16.8 1 18.0 1 C19.2 1 19.8 3.8 21.0 3.8 C22.2 3.8 22.8 1 24.0 1 C25.2 1 25.8 3.8 27.0 3.8 C28.2 3.8 28.8 1 30.0 1 C31.2 1 31.8 3.8 33.0 3.8 C34.2 3.8 34.8 1 36.0 1 C37.2 1 37.8 3.8 39.0 3.8 C40.2 3.8 40.8 1 42.0 1 C43.2 1 43.8 3.8 45.0 3.8 C46.2 3.8 46.8 1 48.0 1 C49.2 1 49.8 3.8 51.0 3.8 C52.2 3.8 52.8 1 54.0 1 C55.2 1 55.8 3.8 57.0 3.8 C58.2 3.8 58.8 1 60.0 1 C61.2 1 61.8 3.8 63.0 3.8 C64.2 3.8 64.8 1 66.0 1 C67.2 1 67.8 3.8 69.0 3.8 C70.2 3.8 70.8 1 72.0 1 C73.2 1 73.8 3.8 75.0 3.8 C76.2 3.8 76.8 1 78.0 1 C79.2 1 79.8 3.8 81.0 3.8 C82.2 3.8 82.8 1 84.0 1 C85.2 1 85.8 3.8 87.0 3.8 C88.2 3.8 88.8 1 90.0 1 C91.2 1 91.8 3.8 93.0 3.8 C94.2 3.8 94.8 1 96.0 1 C97.2 1 97.8 3.8 99.0 3.8 C100.2 3.8 100.8 1 102.0 1 C103.2 1 103.8 3.8 105.0 3.8 C106.2 3.8 106.8 1 108.0 1 C109.2 1 109.8 3.8 111.0 3.8 C112.2 3.8 112.8 1 114.0 1 C115.2 1 115.8 3.8 117.0 3.8 C118.2 3.8 118.8 1 120.0 1 C121.2 1 121.8 3.8 123.0 3.8" fill="none" stroke="#ee1c1c" stroke-width="1.3"/></svg>
<svg style="left:165px;top:1004px" width="24" height="22" viewBox="0 0 24 22" ><path d="M11.5 4.5 H4.5 V16.5 H11.5" fill="none" stroke="#666666" stroke-width="1.1"/><path d="M14 4.5 H20.5 V6.6 M20.5 15.3 V16.5 H14" fill="none" stroke="#666666" stroke-width="1.1"/><path d="M12.5 5 V18" stroke="#666666" stroke-width="1.1"/><path d="M10.6 4.6 H14.4 M10.6 17.2 L12.5 19 L14.4 17.2" fill="none" stroke="#666666" stroke-width="1"/><path d="M15.6 8.6 L20.4 13.4 M20.4 8.6 L15.6 13.4" stroke="#666666" stroke-width="1.5"/></svg>
<svg style="left:208px;top:1006px" width="20" height="20" viewBox="0 0 20 20" ><path d="M4.1 9 V16.2 H16.3 V3.8" fill="none" stroke="#666666" stroke-width="1.1"/><rect x="10.2" y="3.2" width="6.6" height="3.4" fill="#666666"/><circle cx="5.3" cy="5.4" r="3.4" fill="#666666"/><rect x="8.9" y="7.8500000000000005" width="2" height="1.1" fill="#666666"/><rect x="11.9" y="7.8500000000000005" width="2" height="1.1" fill="#666666"/><rect x="6" y="10.95" width="2" height="1.1" fill="#666666"/><rect x="8.9" y="10.95" width="2" height="1.1" fill="#666666"/><rect x="11.9" y="10.95" width="2" height="1.1" fill="#666666"/><rect x="6" y="13.95" width="2" height="1.1" fill="#666666"/><rect x="8.9" y="13.95" width="2" height="1.1" fill="#666666"/><rect x="11.9" y="13.95" width="2" height="1.1" fill="#666666"/></svg>
<svg style="left:1455px;top:1003px" width="26" height="24" viewBox="0 0 26 24" ><rect x="4.1" y="4.1" width="18.7" height="12.6" rx="1.6" fill="#505050"/><circle cx="17.5" cy="17.4" r="6.6" fill="#f3f3f3"/><path d="M8 21.8 L9.2 20.2 H12.7 V21.8 Z" fill="#505050"/><g transform="translate(17.5 17.4)" fill="#505050"><rect x="-1.3" y="-5.6" width="2.6" height="11.2" transform="rotate(0)"/><rect x="-1.3" y="-5.6" width="2.6" height="11.2" transform="rotate(60)"/><rect x="-1.3" y="-5.6" width="2.6" height="11.2" transform="rotate(120)"/><circle r="3.9"/></g><circle cx="17.5" cy="17.4" r="1.7" fill="#fff"/></svg>
<svg style="left:1594px;top:1006px" width="22" height="20" viewBox="0 0 22 20" ><path d="M9 2.6 H2.5 V14.5 H9 M12.6 2.6 H18.5 V14.5 H12.6" fill="none" stroke="#666666" stroke-width="1.1"/><path d="M10.3 3 V16.6" stroke="#666666" stroke-width="1.1"/><path d="M9 15.6 L10.3 16.9 L11.6 15.6" fill="none" stroke="#666666" stroke-width="1"/><path d="M4 5.3 H7.9 M13 5.3 H17.2" stroke="#666666" stroke-width="1"/><path d="M4 7.4 H7.9 M13 7.4 H17.2" stroke="#666666" stroke-width="1"/><path d="M4 9.4 H7.9 M13 9.4 H17.2" stroke="#666666" stroke-width="1"/><path d="M4 11.4 H7.9 M13 11.4 H17.2" stroke="#666666" stroke-width="1"/></svg>
<div class="b" style="left:1626px;top:1003px;width:42px;height:27px;background:#c6c6c6"></div>
<svg style="left:1636px;top:1006px" width="22" height="20" viewBox="0 0 22 20" ><rect x="2.7" y="2.6" width="16.2" height="15.3" fill="none" stroke="#666666" stroke-width="1.3"/><path d="M4.6 5.3 H16.9" stroke="#666666" stroke-width="1.1"/><path d="M4.6 8.4 H16.9" stroke="#666666" stroke-width="1.1"/><path d="M4.6 11.4 H16.9" stroke="#666666" stroke-width="1.1"/><path d="M4.6 14.5 H16.9" stroke="#666666" stroke-width="1.1"/></svg>
<svg style="left:1679px;top:1006px" width="22" height="22" viewBox="0 0 22 22" ><path d="M10 13.5 H2.4 V3.5 H15.5 V7.5" fill="none" stroke="#666666" stroke-width="1.1"/><path d="M4.3 6.4 H13.9" stroke="#666666" stroke-width="1"/><path d="M4.3 8.4 H12" stroke="#666666" stroke-width="1"/><path d="M4.3 10.4 H10" stroke="#666666" stroke-width="1"/><path d="M4.3 12.5 H9" stroke="#666666" stroke-width="1"/><circle cx="14.5" cy="13.4" r="5.2" fill="#f3f3f3"/><circle cx="14.5" cy="13.4" r="4" fill="none" stroke="#666666" stroke-width="1.1"/><path d="M11.5 10.8 C13 11.5 13.5 13 12.8 14.6 C12.5 15.5 13 16.5 14 17 M15.5 9.6 C15.5 11 16.5 12 18 12.4 M16 17.2 C16.3 16 17.2 15.2 18.3 15.2" fill="none" stroke="#666666" stroke-width="1.6"/></svg>
<div class="b" style="left:1715px;top:1015.5px;width:10px;height:2px;background:#6a6a6a"></div>
<div class="b" style="left:1729px;top:1015.5px;width:125px;height:1px;background:#9a9a9a"></div>
<div class="b" style="left:1789px;top:1009px;width:6px;height:14px;background:#6a6a6a"></div>
<div class="b" style="left:1858px;top:1015.5px;width:10px;height:2px;background:#6a6a6a"></div>
<div class="b" style="left:1862px;top:1011.5px;width:2px;height:10px;background:#6a6a6a"></div>
<div class="b" style="left:1853px;top:1037px;width:3.6px;height:2px;background:#f0f0f0"></div>
<div class="b" style="left:1863px;top:1037px;width:3.8px;height:2px;background:#f0f0f0"></div>
<div class="b" style="left:1871px;top:1037px;width:4.5px;height:2px;background:#f0f0f0"></div>
<div class="b" style="left:1885.7px;top:1037px;width:2.3px;height:2px;background:#f0f0f0"></div>
<div class="b" style="left:1892px;top:1037px;width:4px;height:2px;background:#f0f0f0"></div>
<div class="b" style="left:1901.4px;top:1037px;width:3.6px;height:2px;background:#f0f0f0"></div>
</body></html>
